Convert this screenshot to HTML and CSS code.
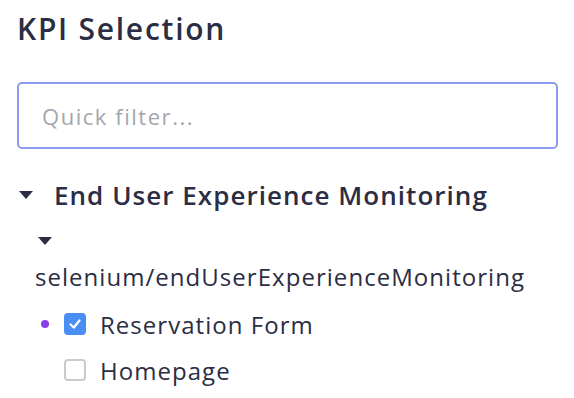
FILE: index.html
```html
<!DOCTYPE html>
<html>
<head>
  <title>KPI Selection</title>
  <link rel="stylesheet" href="styles.css">
</head>
<body>
  <div class="panel">
    <h1>KPI Selection</h1>

    <input class="filter" type="text" placeholder="Quick filter...">

    <ul class="tree">
      <li class="group">
        <div class="group-head">
          <span class="caret"></span>
          <span class="group-name">End User Experience Monitoring</span>
        </div>
        <div class="sub">
          <span class="caret"></span>
          <div class="sub-name">selenium/endUserExperienceMonitoring</div>
          <div class="kpis">
            <div class="kpi">
              <span class="dot"></span>
              <span class="box checked">
                <svg width="16" height="16" viewBox="0 0 16 16">
                  <path d="M3.5 8.5 L6.8 11.5 L12.5 4.5" fill="none" stroke="#fff" stroke-width="2.2" stroke-linecap="round" stroke-linejoin="round"/>
                </svg>
              </span>
              <span class="kpi-name">Reservation Form</span>
            </div>
            <div class="kpi">
              <span class="dot off"></span>
              <span class="box"></span>
              <span class="kpi-name">Homepage</span>
            </div>
          </div>
        </div>
      </li>
    </ul>
  </div>
</body>
</html>
```
FILE: styles.css
```css
* {
  margin: 0;
  padding: 0;
  box-sizing: border-box;
}

body {
  background: #fff;
  font-family: 'Open Sans', sans-serif;
  color: #2b2d44;
  letter-spacing: 0.065em;
}

.panel {
  padding: 8px 17px;
}

h1 {
  font-size: 30px;
  font-weight: 600;
  line-height: 42px;
  letter-spacing: 0.058em;
}

.filter {
  display: block;
  width: 541px;
  height: 67px;
  margin-top: 32px;
  padding: 0 23px;
  border: 2px solid #8c9cf2;
  border-radius: 5px;
  font-family: 'Open Sans', sans-serif;
  font-size: 22px;
  letter-spacing: 0.07em;
  color: #2b2d44;
  outline: none;
}

.filter::placeholder {
  color: #a3a6ad;
}

.tree {
  list-style: none;
  margin-top: 26px;
}

.group-head {
  display: flex;
  align-items: center;
  height: 40px;
}

.caret {
  display: block;
  width: 0;
  height: 0;
  border-left: 7px solid transparent;
  border-right: 7px solid transparent;
  border-top: 8px solid #2b2d44;
}

.group-head .caret {
  margin: 0 21px 0 2px;
}

.group-name {
  font-size: 26px;
  font-weight: 600;
}

.sub {
  padding-left: 18px;
}

.sub .caret {
  margin: 22px 0 0 3px;
}

.sub-name {
  font-size: 24px;
  line-height: 38px;
  margin-top: 13px;
}

.kpis {
  margin-top: 5px;
}

.kpi {
  display: flex;
  align-items: center;
  height: 46px;
  margin-left: 6px;
}

.dot {
  width: 8px;
  height: 8px;
  border-radius: 50%;
  background: #8a3ee8;
  margin-right: 15px;
}

.dot.off {
  background: transparent;
}

.box {
  display: flex;
  align-items: center;
  justify-content: center;
  width: 22px;
  height: 22px;
  border: 2px solid #c9cbce;
  border-radius: 4px;
  margin-right: 14px;
}

.box.checked {
  background: #4a8ef4;
  border-color: #4a8ef4;
}

.kpi-name {
  font-size: 24px;
}
```
